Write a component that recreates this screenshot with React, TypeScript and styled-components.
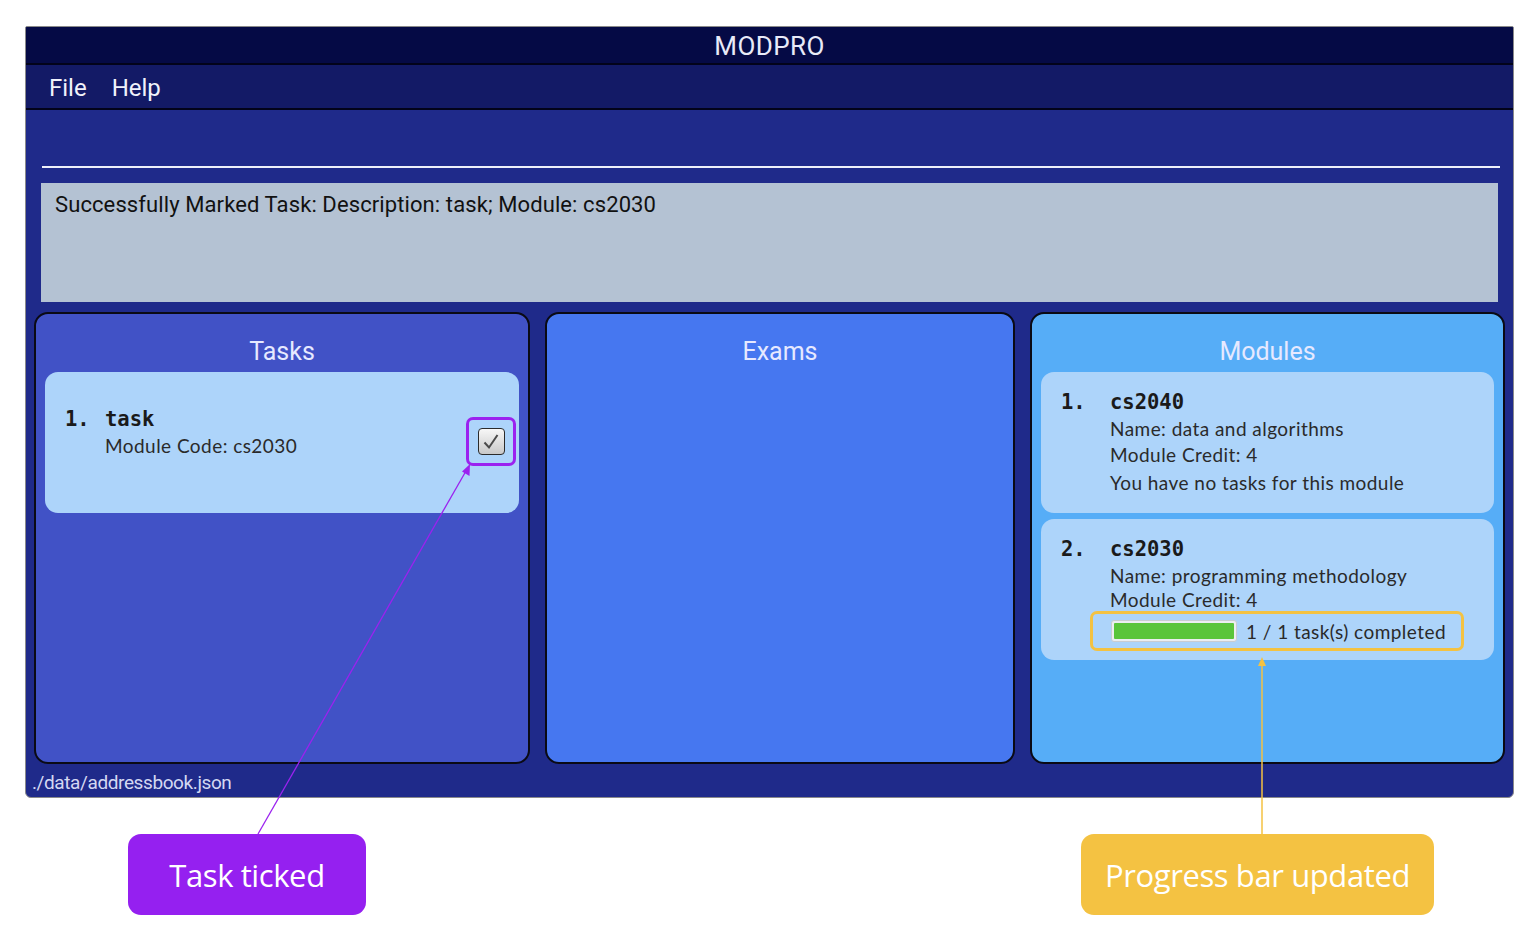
import styled, { createGlobalStyle } from 'styled-components';

const GlobalStyle = createGlobalStyle`
  html, body {
    margin: 0;
    padding: 0;
    background: #ffffff;
  }
  * {
    box-sizing: border-box;
  }
`;

const Page = styled.div`
  position: relative;
  width: 1538px;
  height: 932px;
  padding: 26px 24px 0 25px;
  font-family: Roboto, 'Liberation Sans', sans-serif;
`;

const Window = styled.div`
  width: 1489px;
  height: 772px;
  display: flex;
  flex-direction: column;
  background: #1f2a8a;
  border: 1px solid #8a8a8a;
  border-radius: 2px 2px 6px 6px;
  overflow: hidden;
`;

const TitleBar = styled.div`
  height: 38px;
  flex: none;
  display: flex;
  align-items: center;
  justify-content: center;
  padding-top: 1px;
  background: #050a45;
  color: #e8eaf8;
  font-size: 26px;
  letter-spacing: 0.4px;
  border-bottom: 2px solid #02031a;
`;

const MenuBar = styled.div`
  height: 45px;
  flex: none;
  display: flex;
  align-items: center;
  gap: 25px;
  padding-left: 23px;
  padding-top: 2px;
  background: #131a66;
  border-bottom: 2px solid #02031a;
`;

const MenuItem = styled.span`
  color: #f1f2fb;
  font-size: 24px;
`;

const Main = styled.div`
  flex: 1;
  display: flex;
  flex-direction: column;
`;

const CommandBox = styled.div`
  height: 58px;
  margin: 0 13px 0 16px;
  border-bottom: 2px solid #eef0fa;
  flex: none;
`;

const ResultBox = styled.div`
  height: 119px;
  margin: 15px 15px 0 15px;
  padding: 9px 14px;
  background: #b4c2d3;
  color: #111;
  font-size: 22px;
  letter-spacing: 0.1px;
  flex: none;
`;

const PanelRow = styled.div`
  display: grid;
  grid-template-columns: 496px 470px 475px;
  gap: 15px;
  margin: 10px 0 0 8px;
  height: 452px;
`;

const Panel = styled.div<{ $bg: string }>`
  background: ${(p) => p.$bg};
  border: 2.5px solid #0a0a14;
  border-radius: 14px;
  display: flex;
  flex-direction: column;
  padding: 0 9px;
`;

const PanelTitle = styled.div`
  height: 57px;
  display: flex;
  align-items: center;
  justify-content: center;
  padding-top: 18px;
  color: #e6e9ff;
  font-size: 25px;
  margin-bottom: 1px;
`;

const CardList = styled.div`
  display: flex;
  flex-direction: column;
  gap: 6px;
`;

const Card = styled.div<{ $pad: number }>`
  height: 141px;
  background: #add4fa;
  border-radius: 13px;
  padding: ${(p) => p.$pad}px 0 0 20px;
  position: relative;
  color: #222;
`;

const HeadRow = styled.div`
  display: flex;
  align-items: center;
  height: 26px;
  font-family: 'DejaVu Sans Mono', 'Liberation Mono', monospace;
  font-weight: bold;
  font-size: 20.5px;
  color: #1a1a1a;
`;

const Index = styled.span<{ $w: number }>`
  width: ${(p) => p.$w}px;
  flex: none;
`;

const Body = styled.div<{ $indent: number }>`
  margin-left: ${(p) => p.$indent}px;
  font-family: Lato, 'Open Sans', sans-serif;
  font-size: 19px;
  color: #2a2a2a;
  letter-spacing: 0.45px;
`;

const Line = styled.div<{ $h?: number }>`
  height: ${(p) => p.$h ?? 26}px;
  display: flex;
  align-items: center;
`;

const CheckHighlight = styled.div`
  position: absolute;
  right: 3px;
  top: 45px;
  width: 50px;
  height: 49px;
  border: 3.5px solid #9b22ef;
  border-radius: 7px;
  display: flex;
  align-items: center;
  justify-content: center;
`;

const CheckBox = styled.div`
  width: 27px;
  height: 27px;
  border: 1.5px solid #2b2b2b;
  border-radius: 4px;
  background: linear-gradient(#f7f7f7, #c9c9c9);
  display: flex;
  align-items: center;
  justify-content: center;
`;

const ProgressHighlight = styled.div`
  display: flex;
  align-items: center;
  gap: 9px;
  width: 374px;
  height: 40px;
  margin: 1px 0 0 -20px;
  padding-left: 18px;
  border: 3px solid #f4c242;
  border-radius: 7px;
`;

const BarTrack = styled.div`
  width: 126px;
  height: 22px;
  padding: 2px;
  border: 1px solid #c9ccd2;
  border-radius: 3px;
  background: #eceef0;
`;

const BarFill = styled.div`
  height: 100%;
  background: #5ac53a;
  border-radius: 1px;
`;

const StatusBar = styled.div`
  height: 34px;
  display: flex;
  align-items: center;
  padding-left: 6px;
  padding-top: 2px;
  color: #d4d8f2;
  font-size: 19px;
  letter-spacing: -0.4px;
`;

const CalloutRow = styled.div`
  display: flex;
  margin-top: 36px;
  padding-left: 103px;
`;

const Callout = styled.div<{ $bg: string; $w: number; $ml?: number }>`
  width: ${(p) => p.$w}px;
  height: 81px;
  margin-left: ${(p) => p.$ml ?? 0}px;
  background: ${(p) => p.$bg};
  border-radius: 13px;
  display: flex;
  align-items: center;
  justify-content: center;
  color: #ffffff;
  font-family: 'Open Sans', 'Noto Sans', sans-serif;
  font-size: 31px;
  letter-spacing: -0.4px;
`;

const Overlay = styled.svg`
  position: absolute;
  left: 0;
  top: 0;
  pointer-events: none;
`;

export default function App() {
  return (
    <Page>
      <GlobalStyle />
      <Window>
        <TitleBar>MODPRO</TitleBar>
        <MenuBar>
          <MenuItem>File</MenuItem>
          <MenuItem>Help</MenuItem>
        </MenuBar>
        <Main>
          <CommandBox />
          <ResultBox>Successfully Marked Task: Description: task; Module: cs2030</ResultBox>
          <PanelRow>
            <Panel $bg="#4152c6">
              <PanelTitle>Tasks</PanelTitle>
              <CardList>
                <Card $pad={34}>
                  <HeadRow>
                    <Index $w={40}>1.</Index>
                    <span>task</span>
                  </HeadRow>
                  <Body $indent={40}>
                    <Line>Module Code: cs2030</Line>
                  </Body>
                  <CheckHighlight>
                    <CheckBox>
                      <svg width="20" height="20" viewBox="0 0 20 20">
                        <path d="M3.5 10.5 L8 15.5 L16.5 3" fill="none" stroke="#4a4a4a" strokeWidth="2" />
                      </svg>
                    </CheckBox>
                  </CheckHighlight>
                </Card>
              </CardList>
            </Panel>
            <Panel $bg="#4677f0">
              <PanelTitle>Exams</PanelTitle>
            </Panel>
            <Panel $bg="#56adf7">
              <PanelTitle>Modules</PanelTitle>
              <CardList>
                <Card $pad={17}>
                  <HeadRow>
                    <Index $w={49}>1.</Index>
                    <span>cs2040</span>
                  </HeadRow>
                  <Body $indent={49}>
                    <Line>Name: data and algorithms</Line>
                    <Line>Module Credit: 4</Line>
                    <Line $h={30}>You have no tasks for this module</Line>
                  </Body>
                </Card>
                <Card $pad={17}>
                  <HeadRow>
                    <Index $w={49}>2.</Index>
                    <span>cs2030</span>
                  </HeadRow>
                  <Body $indent={49}>
                    <Line>Name: programming methodology</Line>
                    <Line $h={22}>Module Credit: 4</Line>
                    <ProgressHighlight>
                      <BarTrack>
                        <BarFill style={{ width: '100%' }} />
                      </BarTrack>
                      <span>1 / 1 task(s) completed</span>
                    </ProgressHighlight>
                  </Body>
                </Card>
              </CardList>
            </Panel>
          </PanelRow>
          <StatusBar>./data/addressbook.json</StatusBar>
        </Main>
      </Window>
      <CalloutRow>
        <Callout $bg="#9520f0" $w={238}>Task ticked</Callout>
        <Callout $bg="#f4c242" $w={353} $ml={715}>Progress bar updated</Callout>
      </CalloutRow>
      <Overlay width={1538} height={932} viewBox="0 0 1538 932">
        <line x1="258" y1="834" x2="466" y2="471" stroke="#9b22ef" strokeWidth="1.3" />
        <polygon points="470,464 469.5,476 462,471.5" fill="#9b22ef" />
        <line x1="1262" y1="834" x2="1262" y2="664" stroke="#f4c242" strokeWidth="1.5" />
        <polygon points="1262,657 1266,666 1258,666" fill="#f4c242" />
      </Overlay>
    </Page>
  );
}
